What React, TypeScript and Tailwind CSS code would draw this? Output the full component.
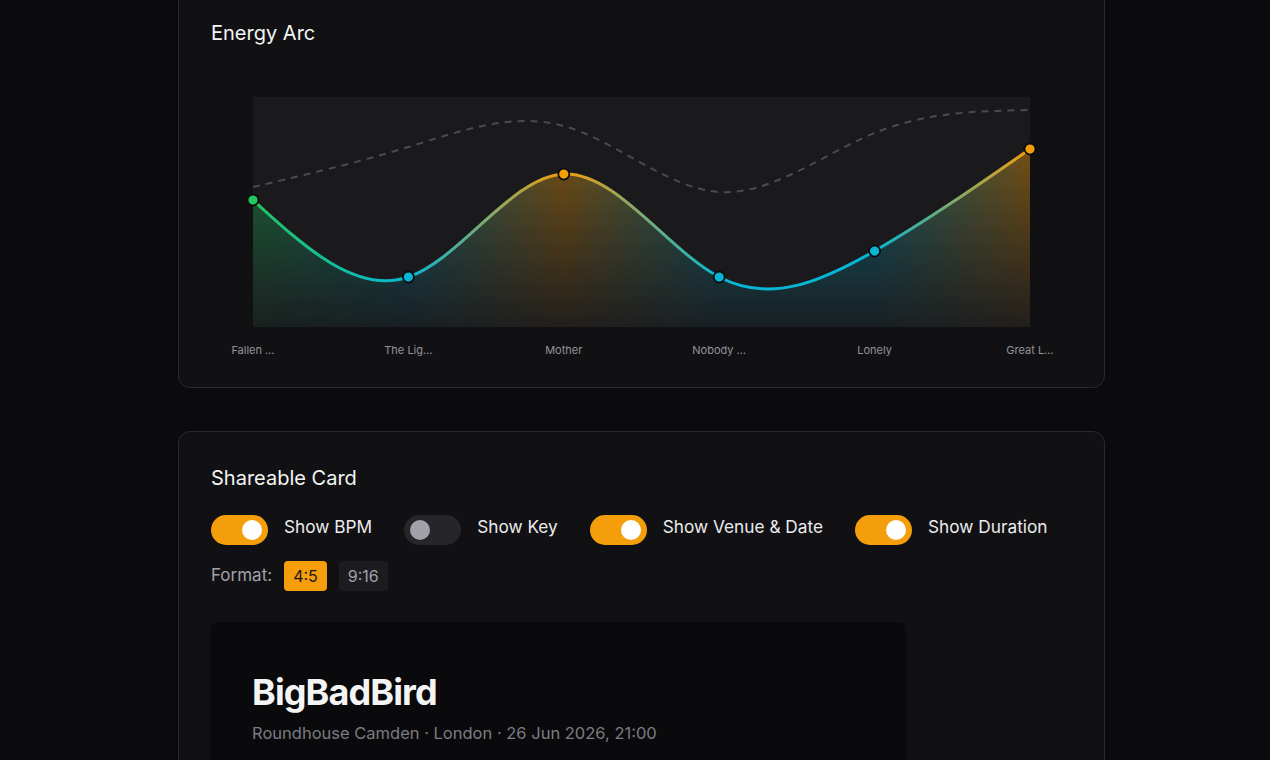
import React, { useState } from "react";

interface IPoint {
  x: number;
  y: number;
}

const PLOT_LEFT = 42;
const PLOT_RIGHT = 819;
const PLOT_TOP = 34;
const PLOT_BOTTOM = 264;

const tracks = [
  { label: "Fallen …", energy: 137, bpm: 124, color: "#22c55e" },
  { label: "The Lig…", energy: 214, bpm: 84, color: "#06b6d4" },
  { label: "Mother", energy: 111, bpm: 63, color: "#f59e0b" },
  { label: "Nobody …", energy: 214, bpm: 129, color: "#06b6d4" },
  { label: "Lonely", energy: 188, bpm: 70, color: "#06b6d4" },
  { label: "Great L…", energy: 86, bpm: 47, color: "#f59e0b" },
];

// natural cubic spline through the points, as bezier segments
function naturalPath(pts: IPoint[]) {
  const n = pts.length;
  const m = n - 2;
  const d: number[] = [];
  for (let i = 1; i < n - 1; i++) d.push(pts[i + 1].y - 2 * pts[i].y + pts[i - 1].y);
  const c: number[] = new Array(m).fill(0);
  const r: number[] = new Array(m).fill(0);
  for (let i = 0; i < m; i++) {
    const b = 4 - (i > 0 ? c[i - 1] : 0);
    c[i] = 1 / b;
    r[i] = (d[i] - (i > 0 ? r[i - 1] : 0)) / b;
  }
  const M: number[] = new Array(n).fill(0);
  for (let i = m - 1; i >= 0; i--) M[i + 1] = r[i] - c[i] * M[i + 2];

  let p = `M${pts[0].x},${pts[0].y}`;
  for (let i = 0; i < n - 1; i++) {
    const a = pts[i];
    const b = pts[i + 1];
    const dy = b.y - a.y;
    const s0 = dy - 2 * M[i] - M[i + 1];
    const s1 = dy + M[i] + 2 * M[i + 1];
    const h = b.x - a.x;
    p += ` C${a.x + h / 3},${a.y + s0 / 3} ${b.x - h / 3},${b.y - s1 / 3} ${b.x},${b.y}`;
  }
  return p;
}

function EnergyChart() {
  const step = (PLOT_RIGHT - PLOT_LEFT) / (tracks.length - 1);
  const energyPts = tracks.map((t, i) => ({ x: PLOT_LEFT + i * step, y: t.energy }));
  const bpmPts = tracks.map((t, i) => ({ x: PLOT_LEFT + i * step, y: t.bpm }));
  const line = naturalPath(energyPts);
  const area = `${line} L${PLOT_RIGHT},${PLOT_BOTTOM} L${PLOT_LEFT},${PLOT_BOTTOM} Z`;

  return (
    <svg width={861} height={297} className="block mt-4">
      <defs>
        <linearGradient id="arcStroke" gradientUnits="userSpaceOnUse" x1={PLOT_LEFT} x2={PLOT_RIGHT} y1={0} y2={0}>
          {tracks.map((t, i) => (
            <stop key={i} offset={i / (tracks.length - 1)} stopColor={t.color} />
          ))}
        </linearGradient>
        <linearGradient id="fadeDown" gradientUnits="userSpaceOnUse" x1={0} x2={0} y1={PLOT_TOP + 40} y2={PLOT_BOTTOM}>
          <stop offset="0" stopColor="#fff" stopOpacity="0.44" />
          <stop offset="1" stopColor="#fff" stopOpacity="0.04" />
        </linearGradient>
        <mask id="areaMask">
          <rect x={PLOT_LEFT} y={PLOT_TOP} width={PLOT_RIGHT - PLOT_LEFT} height={PLOT_BOTTOM - PLOT_TOP} fill="url(#fadeDown)" />
        </mask>
      </defs>
      <rect x={PLOT_LEFT} y={PLOT_TOP} width={PLOT_RIGHT - PLOT_LEFT} height={PLOT_BOTTOM - PLOT_TOP} fill="#1a1a1d" />
      <path d={naturalPath(bpmPts)} fill="none" stroke="#4a4a4f" strokeWidth={2} strokeDasharray="7 6" />
      <path d={area} fill="url(#arcStroke)" mask="url(#areaMask)" />
      <path d={line} fill="none" stroke="url(#arcStroke)" strokeWidth={3} strokeLinecap="round" />
      {energyPts.map((p, i) => (
        <circle key={i} cx={p.x} cy={p.y} r={5.5} fill={tracks[i].color} stroke="#0b0b0d" strokeWidth={1.75} />
      ))}
      {energyPts.map((p, i) => (
        <text
          key={i}
          x={p.x}
          y={291}
          textAnchor="middle"
          fontSize={11}
          fill="#939399"
          fontFamily="Inter, 'Liberation Sans', sans-serif"
        >
          {tracks[i].label}
        </text>
      ))}
    </svg>
  );
}

function Toggle({ label, on, onClick }: { label: string; on: boolean; onClick: () => void }) {
  return (
    <div className="flex items-start gap-4">
      <button
        type="button"
        onClick={onClick}
        className={`flex h-[30px] w-[57px] items-center rounded-full px-[6px] ${
          on ? "justify-end bg-[#f59e0b]" : "justify-start bg-[#26262a]"
        }`}
      >
        <span className={`h-5 w-5 rounded-full ${on ? "bg-white" : "bg-[#a1a1aa]"}`} />
      </button>
      <span className="text-[17.25px] leading-6 text-[#ececee]">{label}</span>
    </div>
  );
}

function App() {
  const [opts, setOpts] = useState({ bpm: true, key: false, venue: true, duration: true });
  const [format, setFormat] = useState<"4:5" | "9:16">("4:5");

  return (
    <div className="min-h-screen bg-[#0b0b0d] font-['Inter','Liberation_Sans',sans-serif] text-[#f4f4f5] overflow-hidden">
      <div className="ml-[178px] w-[927px] -mt-[14px] flex flex-col gap-[43px]">
        <div className="rounded-xl border border-[#2a2a2e] bg-[#111114] px-8 pt-8 pb-[27px]">
          <h2 className="text-xl leading-7 font-normal">Energy Arc</h2>
          <EnergyChart />
        </div>

        <div className="rounded-xl border border-[#2a2a2e] bg-[#111114] p-8">
          <h2 className="text-xl leading-7 font-normal">Shareable Card</h2>
          <div className="mt-[23px] flex flex-wrap items-center gap-x-8">
            <Toggle label="Show BPM" on={opts.bpm} onClick={() => setOpts({ ...opts, bpm: !opts.bpm })} />
            <Toggle label="Show Key" on={opts.key} onClick={() => setOpts({ ...opts, key: !opts.key })} />
            <Toggle label="Show Venue & Date" on={opts.venue} onClick={() => setOpts({ ...opts, venue: !opts.venue })} />
            <Toggle label="Show Duration" on={opts.duration} onClick={() => setOpts({ ...opts, duration: !opts.duration })} />
          </div>
          <div className="mt-4 flex items-center gap-3">
            <span className="text-[17px] text-[#a1a1aa]">Format:</span>
            {(["4:5", "9:16"] as const).map((f) => (
              <button
                key={f}
                type="button"
                onClick={() => setFormat(f)}
                className={`h-[30px] rounded px-[9px] text-base ${
                  format === f ? "bg-[#f59e0b] text-[#18181b]" : "bg-[#1c1c20] text-[#a1a1aa]"
                }`}
              >
                {f}
              </button>
            ))}
          </div>
          <div className="mt-[31px] -ml-px w-[696px] aspect-[4/5] rounded-lg bg-[#0a0a0c] pl-[42px] pt-[50px]">
            <h1 className="text-4xl leading-10 font-bold tracking-tight text-[#f4f4f5]">BigBadBird</h1>
            <p className="mt-[7px] text-[16.5px] leading-7 text-[#7c7c82]">
              Roundhouse Camden · London · 26 Jun 2026, 21:00
            </p>
          </div>
        </div>
      </div>
    </div>
  );
}

export default App;
